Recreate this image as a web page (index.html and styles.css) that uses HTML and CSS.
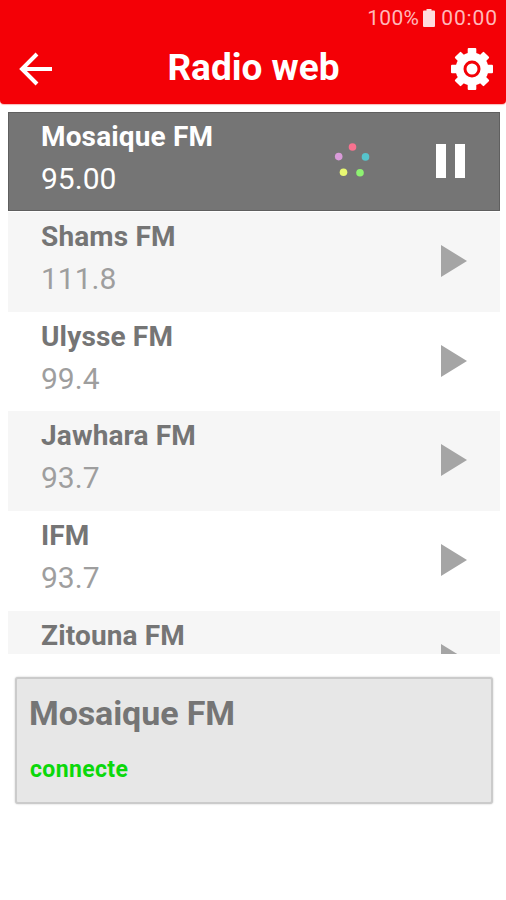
FILE: index.html
```html
<!DOCTYPE html>
<html lang="fr">
<head>
    <meta charset="UTF-8">
    <meta name="viewport" content="width=device-width, initial-scale=1.0">
    <title>Radio web</title>
    <link rel="stylesheet" href="styles.css">
</head>
<body>
    <header class="header">
        <div class="status-bar">
            <span>100%</span>
            <svg class="battery" width="12" height="18" viewBox="0 0 12 18"><path d="M3.5 0h5v1.5H11q1 0 1 1V17q0 1-1 1H1q-1 0-1-1V2.5q0-1 1-1h2.5z"/></svg>
            <span class="clock">00:00</span>
        </div>
        <div class="toolbar">
            <svg class="back" width="34" height="34" viewBox="0 0 34 34"><path d="M33 17H3M18 2L3 17l15 15"/></svg>
            <h1 class="title">Radio web</h1>
            <svg class="settings" width="42" height="42" viewBox="-21 -21 42 42">
                <circle r="16.5"/>
                <rect x="-4.3" y="-21" width="8.6" height="42" rx="1"/>
                <rect x="-21" y="-4.3" width="42" height="8.6" rx="1"/>
                <rect x="-4.3" y="-20.5" width="8.6" height="41" rx="1" transform="rotate(45)"/>
                <rect x="-4.3" y="-20.5" width="8.6" height="41" rx="1" transform="rotate(-45)"/>
                <circle class="ring" r="7"/>
            </svg>
        </div>
    </header>

    <ul class="stations">
        <li class="station playing">
            <div class="station-info">
                <h2 class="name">Mosaique FM</h2>
                <p class="frequency">95.00</p>
            </div>
            <svg class="loader" width="36" height="36" viewBox="0 0 36 36">
                <circle cx="18.5" cy="4" r="3.8" fill="#f8728f"/>
                <circle cx="4.7" cy="13.6" r="3.8" fill="#d99bd9"/>
                <circle cx="31.5" cy="13.9" r="3.8" fill="#56c4cc"/>
                <circle cx="9.5" cy="29.3" r="3.8" fill="#e8f872"/>
                <circle cx="26" cy="29.7" r="3.8" fill="#8ef272"/>
            </svg>
            <svg class="pause" width="29" height="34" viewBox="0 0 29 34"><path d="M0 0h10v34H0zM19 0h10v34H19z"/></svg>
        </li>
        <li class="station">
            <div class="station-info">
                <h2 class="name">Shams FM</h2>
                <p class="frequency">111.8</p>
            </div>
            <svg class="play" width="26" height="32" viewBox="0 0 26 32"><path d="M0 0l26 16L0 32z"/></svg>
        </li>
        <li class="station">
            <div class="station-info">
                <h2 class="name">Ulysse FM</h2>
                <p class="frequency">99.4</p>
            </div>
            <svg class="play" width="26" height="32" viewBox="0 0 26 32"><path d="M0 0l26 16L0 32z"/></svg>
        </li>
        <li class="station">
            <div class="station-info">
                <h2 class="name">Jawhara FM</h2>
                <p class="frequency">93.7</p>
            </div>
            <svg class="play" width="26" height="32" viewBox="0 0 26 32"><path d="M0 0l26 16L0 32z"/></svg>
        </li>
        <li class="station">
            <div class="station-info">
                <h2 class="name">IFM</h2>
                <p class="frequency">93.7</p>
            </div>
            <svg class="play" width="26" height="32" viewBox="0 0 26 32"><path d="M0 0l26 16L0 32z"/></svg>
        </li>
        <li class="station">
            <div class="station-info">
                <h2 class="name">Zitouna FM</h2>
            </div>
            <svg class="play" width="26" height="32" viewBox="0 0 26 32"><path d="M0 0l26 16L0 32z"/></svg>
        </li>
    </ul>

    <section class="player">
        <h2 class="player-name">Mosaique FM</h2>
        <p class="player-status">connecte</p>
    </section>
</body>
</html>
```
FILE: styles.css
```css
* {
    margin: 0;
    padding: 0;
    box-sizing: border-box;
}

body {
    font-family: Roboto, sans-serif;
    background-color: #fff;
    min-height: 100vh;
}

.header {
    height: 104px;
    background-color: #f40006;
    border-radius: 0 0 4px 4px;
    box-shadow: 0 1px 1px #f9b9b9;
}

.status-bar {
    display: flex;
    justify-content: flex-end;
    align-items: center;
    height: 35px;
    padding-right: 8px;
    font-size: 21px;
    letter-spacing: 0.3px;
    color: #ffb8ba;
}

.battery {
    margin: 0 6px 0 4px;
    fill: #ffdcdd;
}

.clock {
    letter-spacing: 0.9px;
}

.toolbar {
    display: grid;
    grid-template-columns: 42px 1fr 42px;
    align-items: center;
    height: 68px;
    padding: 0 13px 0 19px;
}

.back {
    fill: none;
    stroke: #fff;
    stroke-width: 4;
}

.title {
    font-size: 37px;
    line-height: 44px;
    padding: 0 5px 3px 0;
    text-align: center;
    color: #fff;
}

.settings {
    fill: #fff;
}

.settings .ring {
    fill: none;
    stroke: #f40006;
    stroke-width: 3;
}

.stations {
    height: 543px;
    margin: 7px 6px 0 8px;
    padding-top: 1px;
    list-style: none;
    overflow: hidden;
}

.station {
    display: flex;
    align-items: center;
    height: 99.7px;
    padding: 0 33px;
    color: #757575;
}

.station:nth-child(even) {
    background-color: #f6f6f6;
}

.station.playing {
    height: 99px;
    margin-bottom: 1px;
    padding: 0 34px 0 32px;
    border: 1px solid #5f5f5f;
    background-color: #757575;
    color: #fff;
}

.station-info {
    flex: 1;
    height: 100%;
}

.name {
    font-size: 28px;
    line-height: 42px;
    letter-spacing: 0.15px;
    padding-top: 4px;
    height: 46px;
}

.frequency {
    font-size: 30px;
    line-height: 42px;
    color: #9e9e9e;
}

.playing .name {
    padding-top: 3px;
    height: 45px;
}

.playing .frequency {
    color: #fff;
}

.loader {
    margin: 0 66px 2px 0;
}

.pause {
    margin-bottom: 2px;
    fill: #fff;
}

.play {
    margin-bottom: 2px;
    fill: #a5a5a5;
}

.player {
    height: 127px;
    margin: 23px 13px 0 15px;
    padding: 13px 13px 0 12px;
    border: 2px solid #cbcbcb;
    border-radius: 3px;
    background-color: #e7e7e7;
    box-shadow: 0 0 2px #c4c4c4;
}

.player-name {
    font-size: 34px;
    line-height: 42px;
    letter-spacing: -0.1px;
    color: #757575;
}

.player-status {
    margin-top: 22px;
    padding-left: 1px;
    font-size: 23px;
    font-weight: bold;
    line-height: 28px;
    letter-spacing: 0.35px;
    color: #0bd80b;
}
```
